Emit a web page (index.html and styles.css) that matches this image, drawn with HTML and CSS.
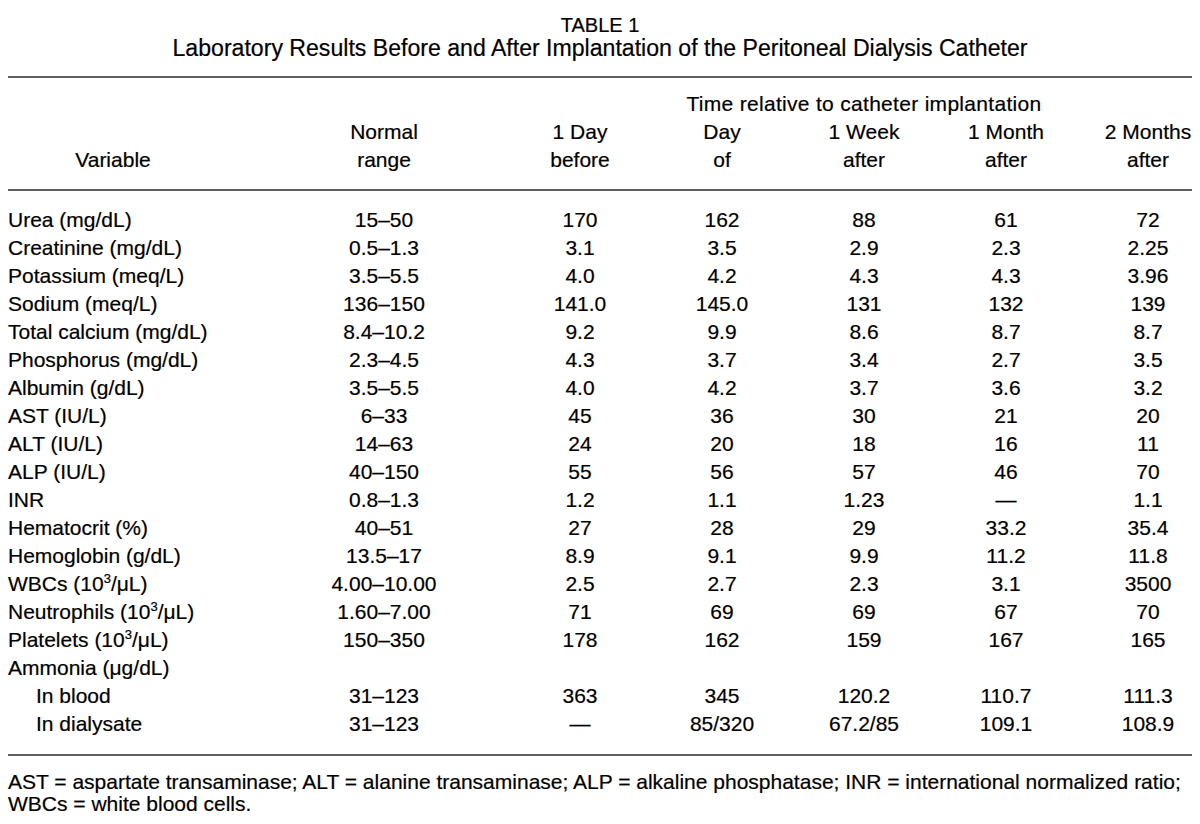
FILE: index.html
```html
<!DOCTYPE html>
<html lang="en">
<head>
<meta charset="utf-8">
<title>Table 1</title>
<link rel="stylesheet" href="styles.css">
</head>
<body>
<div class="page">
  <div class="caption">
    <div class="caption-label">TABLE 1</div>
    <div class="caption-title">Laboratory Results Before and After Implantation of the Peritoneal Dialysis Catheter</div>
  </div>

  <div class="thead">
    <div class="hrow">
      <div class="spanner">Time relative to catheter implantation</div>
    </div>
    <div class="hrow">
      <div class="cell var-head">Variable</div>
      <div class="cell">Normal<br>range</div>
      <div class="cell">1 Day<br>before</div>
      <div class="cell">Day<br>of</div>
      <div class="cell">1 Week<br>after</div>
      <div class="cell">1 Month<br>after</div>
      <div class="cell">2 Months<br>after</div>
    </div>
  </div>

  <div class="tbody">
    <div class="row"><div class="name">Urea (mg/dL)</div><div class="cell">15–50</div><div class="cell">170</div><div class="cell">162</div><div class="cell">88</div><div class="cell">61</div><div class="cell">72</div></div>
    <div class="row"><div class="name">Creatinine (mg/dL)</div><div class="cell">0.5–1.3</div><div class="cell">3.1</div><div class="cell">3.5</div><div class="cell">2.9</div><div class="cell">2.3</div><div class="cell">2.25</div></div>
    <div class="row"><div class="name">Potassium (meq/L)</div><div class="cell">3.5–5.5</div><div class="cell">4.0</div><div class="cell">4.2</div><div class="cell">4.3</div><div class="cell">4.3</div><div class="cell">3.96</div></div>
    <div class="row"><div class="name">Sodium (meq/L)</div><div class="cell">136–150</div><div class="cell">141.0</div><div class="cell">145.0</div><div class="cell">131</div><div class="cell">132</div><div class="cell">139</div></div>
    <div class="row"><div class="name">Total calcium (mg/dL)</div><div class="cell">8.4–10.2</div><div class="cell">9.2</div><div class="cell">9.9</div><div class="cell">8.6</div><div class="cell">8.7</div><div class="cell">8.7</div></div>
    <div class="row"><div class="name">Phosphorus (mg/dL)</div><div class="cell">2.3–4.5</div><div class="cell">4.3</div><div class="cell">3.7</div><div class="cell">3.4</div><div class="cell">2.7</div><div class="cell">3.5</div></div>
    <div class="row"><div class="name">Albumin (g/dL)</div><div class="cell">3.5–5.5</div><div class="cell">4.0</div><div class="cell">4.2</div><div class="cell">3.7</div><div class="cell">3.6</div><div class="cell">3.2</div></div>
    <div class="row"><div class="name">AST (IU/L)</div><div class="cell">6–33</div><div class="cell">45</div><div class="cell">36</div><div class="cell">30</div><div class="cell">21</div><div class="cell">20</div></div>
    <div class="row"><div class="name">ALT (IU/L)</div><div class="cell">14–63</div><div class="cell">24</div><div class="cell">20</div><div class="cell">18</div><div class="cell">16</div><div class="cell">11</div></div>
    <div class="row"><div class="name">ALP (IU/L)</div><div class="cell">40–150</div><div class="cell">55</div><div class="cell">56</div><div class="cell">57</div><div class="cell">46</div><div class="cell">70</div></div>
    <div class="row"><div class="name">INR</div><div class="cell">0.8–1.3</div><div class="cell">1.2</div><div class="cell">1.1</div><div class="cell">1.23</div><div class="cell">—</div><div class="cell">1.1</div></div>
    <div class="row"><div class="name">Hematocrit (%)</div><div class="cell">40–51</div><div class="cell">27</div><div class="cell">28</div><div class="cell">29</div><div class="cell">33.2</div><div class="cell">35.4</div></div>
    <div class="row"><div class="name">Hemoglobin (g/dL)</div><div class="cell">13.5–17</div><div class="cell">8.9</div><div class="cell">9.1</div><div class="cell">9.9</div><div class="cell">11.2</div><div class="cell">11.8</div></div>
    <div class="row"><div class="name">WBCs (10<sup class="sup">3</sup>/μL)</div><div class="cell">4.00–10.00</div><div class="cell">2.5</div><div class="cell">2.7</div><div class="cell">2.3</div><div class="cell">3.1</div><div class="cell">3500</div></div>
    <div class="row"><div class="name">Neutrophils (10<sup class="sup">3</sup>/μL)</div><div class="cell">1.60–7.00</div><div class="cell">71</div><div class="cell">69</div><div class="cell">69</div><div class="cell">67</div><div class="cell">70</div></div>
    <div class="row"><div class="name">Platelets (10<sup class="sup">3</sup>/μL)</div><div class="cell">150–350</div><div class="cell">178</div><div class="cell">162</div><div class="cell">159</div><div class="cell">167</div><div class="cell">165</div></div>
    <div class="row"><div class="name">Ammonia (μg/dL)</div><div class="cell"></div><div class="cell"></div><div class="cell"></div><div class="cell"></div><div class="cell"></div><div class="cell"></div></div>
    <div class="row"><div class="name sub">In blood</div><div class="cell">31–123</div><div class="cell">363</div><div class="cell">345</div><div class="cell">120.2</div><div class="cell">110.7</div><div class="cell">111.3</div></div>
    <div class="row"><div class="name sub">In dialysate</div><div class="cell">31–123</div><div class="cell">—</div><div class="cell">85/320</div><div class="cell">67.2/85</div><div class="cell">109.1</div><div class="cell">108.9</div></div>
  </div>

  <p class="footnote">AST = aspartate transaminase; ALT = alanine transaminase; ALP = alkaline phosphatase; INR = international normalized ratio; WBCs = white blood cells.</p>
</div>
</body>
</html>
```

FILE: styles.css
```css
html, body {
  margin: 0;
  padding: 0;
  background: #ffffff;
}

body {
  font-family: "Liberation Sans", Arial, sans-serif;
  color: #000000;
  font-size: 21px;
  line-height: 28px;
  -webkit-text-stroke: 0.2px #000000;
}

.page {
  padding: 14px 8px 0;
}

.caption {
  text-align: center;
  line-height: 23px;
  margin-bottom: 16px;
}

.caption-label {
  font-size: 20px;
}

.caption-title {
  font-size: 23.1px;
}

.thead {
  border-top: 2px solid #5f5f5f;
  border-bottom: 2px solid #5f5f5f;
  padding: 12px 0 15px;
}

.hrow,
.row {
  display: grid;
  grid-template-columns: 224px 196px repeat(5, 88px);
  column-gap: 54px;
}

.spanner {
  grid-column: 3 / -1;
  text-align: center;
  white-space: nowrap;
  letter-spacing: 0.3px;
}

.cell {
  text-align: center;
  white-space: nowrap;
}

.var-head {
  align-self: end;
  padding-right: 14px;
}

.tbody {
  border-bottom: 2px solid #5f5f5f;
  padding: 15px 0 16px;
}

.row {
  height: 28px;
}

.name {
  text-align: left;
  white-space: nowrap;
}

.name.sub {
  padding-left: 28px;
}

.sup {
  font-size: 0.62em;
  line-height: 0;
  vertical-align: 0.6em;
}

.footnote {
  margin: 0;
  padding-top: 15px;
  line-height: 22px;
}
```
